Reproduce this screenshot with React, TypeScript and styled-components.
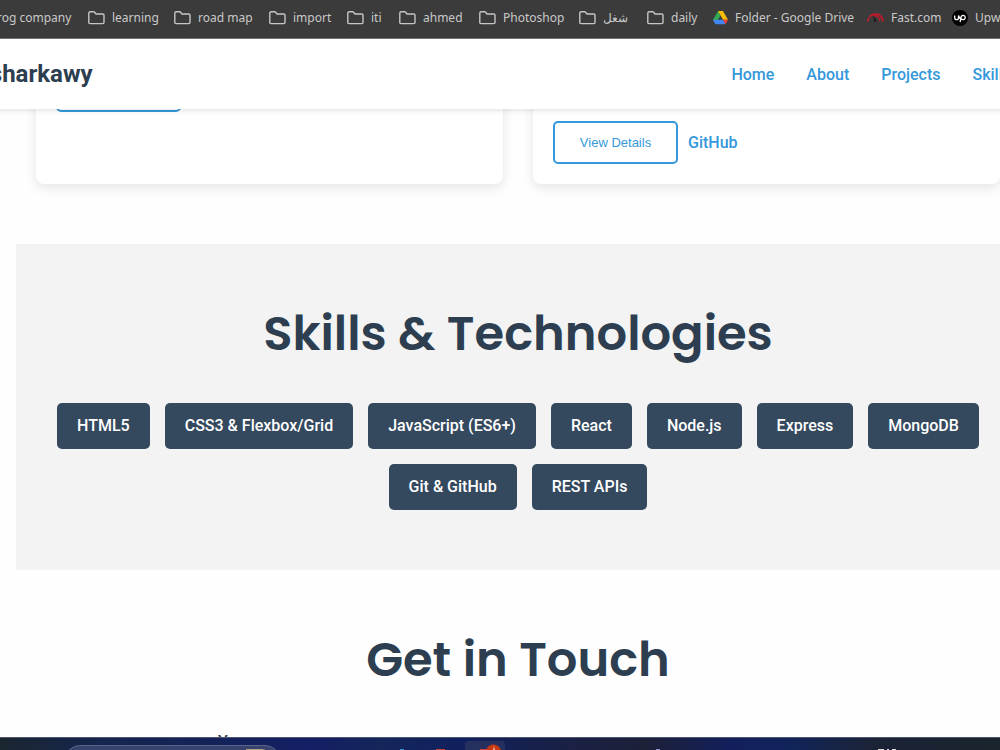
import React from "react";
import styled, { createGlobalStyle } from "styled-components";

const Global = createGlobalStyle`
  * { box-sizing: border-box; }
  html, body { margin: 0; padding: 0; overflow: hidden; }
  body { background: #fefefe; font-family: Roboto, "Liberation Sans", sans-serif; font-size: 16px; color: #2c3e50; }
  h1, h2, p { margin: 0; }
`;

const Screen = styled.div`
  display: flex;
  flex-direction: column;
  height: 100vh;
  overflow: hidden;
`;

const BookmarksBar = styled.nav`
  flex: none;
  display: grid;
  grid-template-columns: 91px 86px 95px 78px 52px 80px 100px 68px 66px 154px 85px 80px;
  align-items: center;
  height: 39px;
  margin-left: -3px;
  padding-bottom: 3px;
  background: #3b3b3b;
  border-bottom: 1px solid #777777;
`;

const Bookmark = styled.a`
  display: flex;
  align-items: center;
  gap: 7px;
  color: #c9c9c9;
  font-family: "Noto Sans", sans-serif;
  font-size: 12px;
  line-height: 18px;
  white-space: nowrap;
  text-decoration: none;
  svg { flex: none; }
`;

const Header = styled.header`
  flex: none;
  position: relative;
  z-index: 1;
  display: flex;
  align-items: center;
  justify-content: space-between;
  height: 70px;
  margin: 0 -11px 0 -30px;
  background: #ffffff;
  box-shadow: 0 2px 5px rgba(0, 0, 0, 0.1);
`;

const Brand = styled.h1`
  font-size: 24px;
  line-height: 38px;
  font-weight: 700;
`;

const Menu = styled.nav`
  display: flex;
  gap: 32px;
  padding-top: 2px;
`;

const TextLink = styled.a`
  color: #3498db;
  font-weight: 500;
  line-height: 26px;
  text-decoration: none;
`;

const Main = styled.main`
  flex: 1;
  min-height: 0;
  margin: 0 -20px 0 16px;
  overflow: visible;
`;

const Projects = styled.section`
  display: grid;
  grid-template-columns: 1fr 1fr;
  gap: 30px;
  margin-top: -60px;
  padding: 0 20px 60px;
`;

const Card = styled.article<{ $lead: number }>`
  display: flex;
  align-items: flex-start;
  gap: 10px;
  padding: ${(p) => p.$lead}px 20px 20px;
  background: #ffffff;
  border-radius: 8px;
  box-shadow: 0 4px 12px rgba(0, 0, 0, 0.1);
`;

const OutlineButton = styled.button`
  height: 43px;
  min-width: 125px;
  padding: 0 24px;
  color: #3498db;
  background: transparent;
  border: 2px solid #3498db;
  border-radius: 5px;
  font-family: "Liberation Sans", Arial, sans-serif;
  font-size: 13px;
  white-space: nowrap;
`;

const CardLink = styled(TextLink)`
  line-height: 43px;
`;

const Section = styled.section<{ $tinted?: boolean }>`
  padding: 60px 20px;
  background: ${(p) => (p.$tinted ? "#f3f3f3" : "transparent")};
`;

const Heading = styled.h2`
  margin-bottom: 39px;
  font-family: Poppins, Inter, sans-serif;
  font-size: 48px;
  font-weight: 600;
  line-height: 60px;
  text-align: center;
  white-space: nowrap;
`;

const Chips = styled.ul`
  display: flex;
  flex-wrap: wrap;
  justify-content: center;
  gap: 15px;
  margin: 0;
  padding: 0;
  list-style: none;
`;

const Chip = styled.li`
  padding: 10px 20px;
  color: #ffffff;
  background: #34495e;
  border-radius: 5px;
  font-weight: 500;
  line-height: 26px;
`;

const ContactForm = styled.div`
  max-width: 600px;
  margin: 0 auto;
  font-weight: 500;
  line-height: 26px;
`;

const Taskbar = styled.footer`
  flex: none;
  position: relative;
  z-index: 1;
  height: 13px;
  overflow: hidden;
  border-top: 1px solid #4d5670;
  background: linear-gradient(90deg, #1b2630 0%, #14254e 10%, #13235a 22%, #141e64 31%, #14265a 38%, #10205e 46%, #1a2144 57%, #1c2038 65%, #131f5c 73%, #11245a 79%, #1b2337 87%, #1a242c 100%);
  svg { display: block; }
`;

const Folder = () => (
  <svg width="17" height="14" viewBox="0 0 17 14" fill="none" stroke="#c6c6c6" strokeWidth="1.4" strokeLinejoin="round">
    <path d="M.8 11.4V2.1Q.8.8 2.1.8H5.6Q6.2.8 6.6 1.3L8 3H14.7Q16 3 16 4.3V11.2Q16 12.6 14.7 12.6H2.1Q.8 12.6.8 11.4Z" />
  </svg>
);

const Drive = () => (
  <svg width="15" height="14" viewBox="0 0 15 14">
    <path d="M5 0H10L7.5 4.4Z" fill="#188038" />
    <path d="M5 0L7.5 4.4L2.5 13.2L0 8.8Z" fill="#34a853" />
    <path d="M10 0L15 8.8H10L5 0Z" fill="#fbbc04" />
    <path d="M0 8.8H10.1L12.5 13.2H2.5Z" fill="#4285f4" />
    <path d="M10 8.8H15L12.5 13.2Z" fill="#ea4335" />
  </svg>
);

const Gauge = () => (
  <svg width="17" height="14" viewBox="0 0 17 14" fill="none">
    <path d="M1 10.5A7.5 7.5 0 0 1 16 10.5" stroke="#b81d2b" strokeWidth="2" strokeDasharray="4 .8 20" />
    <path d="M6.4 5Q12 3.6 13 10.5" stroke="#b81d2b" strokeWidth="1.4" />
    <path d="M6.4 4.6L9.6 10.2L7.4 11Z" fill="#17171a" />
  </svg>
);

const Upwork = () => (
  <svg width="16" height="16" viewBox="0 0 16 16" fill="none" stroke="#ffffff" strokeWidth="1.3">
    <circle cx="8" cy="8" r="8" fill="#000000" stroke="none" />
    <path d="M2.7 5.4V7.7A1.9 1.9 0 0 0 6.5 7.7V5.4Q7.3 8 8.7 9.2M8.1 12L9 7.5A2.1 2.1 0 1 1 10.8 9.6Q9.4 9.6 8.4 8.2" />
  </svg>
);

const bookmarks: { label: string; icon?: React.ReactNode }[] = [
  { label: "learning" },
  { label: "road map" },
  { label: "import" },
  { label: "iti" },
  { label: "ahmed" },
  { label: "Photoshop" },
  { label: "شغل" },
  { label: "daily" },
  { label: "Folder - Google Drive", icon: <Drive /> },
  { label: "Fast.com", icon: <Gauge /> },
  { label: "Upwork", icon: <Upwork /> },
];

const menu = ["Home", "About", "Projects", "Skills"];

const skills = [
  "HTML5",
  "CSS3 & Flexbox/Grid",
  "JavaScript (ES6+)",
  "React",
  "Node.js",
  "Express",
  "MongoDB",
  "Git & GitHub",
  "REST APIs",
];

export default function App() {
  return (
    <Screen>
      <Global />
      <BookmarksBar>
        <Bookmark href="#">rog company</Bookmark>
        {bookmarks.map((b) => (
          <Bookmark href="#" key={b.label}>
            {b.icon ?? <Folder />}
            <span>{b.label}</span>
          </Bookmark>
        ))}
      </BookmarksBar>
      <Header>
        <Brand>Elsharkawy</Brand>
        <Menu>
          {menu.map((m) => (
            <TextLink href="#" key={m}>{m}</TextLink>
          ))}
        </Menu>
      </Header>
      <Main>
        <Projects>
          <Card $lead={20}>
            <OutlineButton>View Details</OutlineButton>
          </Card>
          <Card $lead={72}>
            <OutlineButton>View Details</OutlineButton>
            <CardLink href="#">GitHub</CardLink>
          </Card>
        </Projects>
        <Section $tinted>
          <Heading>Skills &amp; Technologies</Heading>
          <Chips>
            {skills.map((s) => (
              <Chip key={s}>{s}</Chip>
            ))}
          </Chips>
        </Section>
        <Section>
          <Heading>Get in Touch</Heading>
          <ContactForm>Your</ContactForm>
        </Section>
      </Main>
      <Taskbar>
        <svg width="1000" height="12" viewBox="0 0 1000 12">
          <rect x="65" y="7.5" width="215" height="30" rx="15" fill="#38426f" stroke="#5a6389" />
          <path d="M246 12V11H262L266 12Z" fill="#b5a184" />
          <rect x="465" y="3" width="40" height="30" rx="4" fill="#25305f" />
          <circle cx="493.500" cy="14" r="7.500" fill="#c8380f" />
          <path d="M493 12L494 8L495 12Z" fill="#f2b9a2" />
          <path d="M436 11H445V12H436ZM480 11H487V12H480Z" fill="#c84638" />
          <path d="M400 11H404V12H400Z" fill="#2f8fd0" />
          <path d="M656 11H660V12H656Z" fill="#8f8fd6" />
          <path d="M878 11H884V12H878ZM887 11H889V12H887ZM892 11H896V12H892Z" fill="#d8d8d8" />
        </svg>
      </Taskbar>
    </Screen>
  );
}
